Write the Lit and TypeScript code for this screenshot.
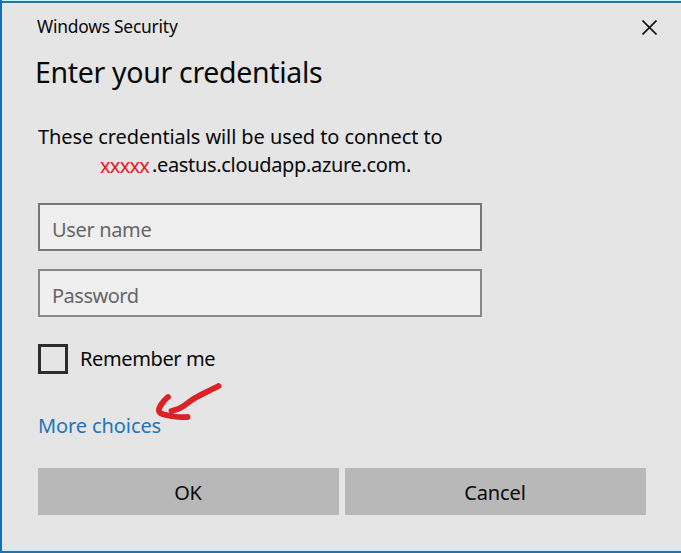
import { LitElement, html, css } from "lit";
import { customElement } from "lit/decorators.js";

@customElement("app-root")
export class AppRoot extends LitElement {
  static styles = css`
    :host {
      display: block;
      font-family: "Noto Sans", "Open Sans", sans-serif;
      font-size: 20px;
      color: #080808;
    }
    * { box-sizing: border-box; }
    .dialog {
      position: relative;
      height: 553px;
      overflow: hidden;
      background: #e5e5e5;
      border-left: 2px solid #0b70c6;
      border-bottom: 2px solid #1974b4;
      box-shadow: inset 0 -2px 0 #d2e8f5;
      padding: 0 35px 0 36px;
      display: flex;
      flex-direction: column;
      white-space: nowrap;
    }
    .edge {
      flex: none;
      height: 4px;
      margin: 0 -35px 0 -38px;
      background: linear-gradient(#c4f6f8 0 1px, #28779c 1px 3px, #d9e9f3 3px 4px);
    }
    .titlebar {
      display: flex;
      justify-content: space-between;
      height: 44px;
      line-height: 44px;
      font-size: 17.4px;
    }
    .caption { margin-left: -1px; letter-spacing: -0.22px; }
    .close { width: 15px; height: 15px; margin: 16px -11px 0 0; }
    h1 {
      margin: 0 0 0 -3px;
      height: 48px;
      line-height: 48px;
      font-size: 28.5px;
      font-weight: 400;
      letter-spacing: -0.32px;
    }
    .message { margin-top: 27px; line-height: 28px; height: 80px; }
    .first { letter-spacing: -0.09px; }
    .host { display: flex; padding-left: 62px; letter-spacing: -0.33px; }
    .mask { color: #e8161c; width: 52px; line-height: 30px; letter-spacing: -0.75px; }
    input {
      display: block;
      width: 444px;
      height: 48px;
      margin: 0 0 18px;
      padding: 5px 12px 0;
      border: 2px solid #777;
      border-radius: 0;
      outline: none;
      background: #efefef;
      font: inherit;
      letter-spacing: -0.35px;
    }
    .password { border-color: #888; letter-spacing: -0.5px; }
    input::placeholder { color: #666; opacity: 1; }
    .remember {
      display: flex;
      align-items: center;
      gap: 12px;
      height: 30px;
      margin-top: 9px;
      line-height: 28px;
      letter-spacing: -0.38px;
    }
    .box { width: 30px; height: 30px; border: 3px solid #2c2c2c; }
    .more {
      align-self: flex-start;
      height: 28px;
      line-height: 28px;
      margin-top: 38px;
      color: #1c76bd;
      text-decoration: none;
      letter-spacing: -0.1px;
    }
    .buttons {
      display: grid;
      grid-template-columns: 301px 301px;
      gap: 6px;
      margin-top: 28px;
    }
    button {
      height: 47px;
      padding: 1px 1px 0 0;
      border: 0;
      background: #b8b8b8;
      font: inherit;
      color: inherit;
      letter-spacing: -0.15px;
    }
    .arrow { position: absolute; left: 148px; top: 375px; width: 80px; height: 50px; }
  `;

  render() {
    return html`
      <div class="dialog">
        <div class="edge"></div>
        <div class="titlebar">
          <span class="caption">Windows Security</span>
          <svg class="close" viewBox="0 0 15 15" fill="none" stroke="#111" stroke-width="1.6">
            <path d="M.5 .5 14.5 14.5M14.5 .5 .5 14.5" />
          </svg>
        </div>
        <h1><span>Enter your credentials</span></h1>
        <div class="message">
          <div><span class="first">These credentials will be used to connect to</span></div>
          <div class="host"><span class="mask">xxxxx</span><span>.eastus.cloudapp.azure.com.</span></div>
        </div>
        <input class="user" type="text" placeholder="User name" />
        <input class="password" type="password" placeholder="Password" />
        <div class="remember"><span class="box"></span><span>Remember me</span></div>
        <a class="more">More choices</a>
        <div class="buttons"><button>OK</button><button>Cancel</button></div>
        <svg class="arrow" viewBox="150 375 80 50" fill="none" stroke="#dc2226" stroke-width="5.8" stroke-linecap="round" stroke-linejoin="round">
          <path d="M218.500 386C211 390 202 394 195 398C188 402 184 407 178 409L171.500 411" />
          <path d="M168 397C164 400 158 408 159 411C160 415 168 415 174 416.500C179 417.500 183 417 187.500 417" />
        </svg>
      </div>
    `;
  }
}
